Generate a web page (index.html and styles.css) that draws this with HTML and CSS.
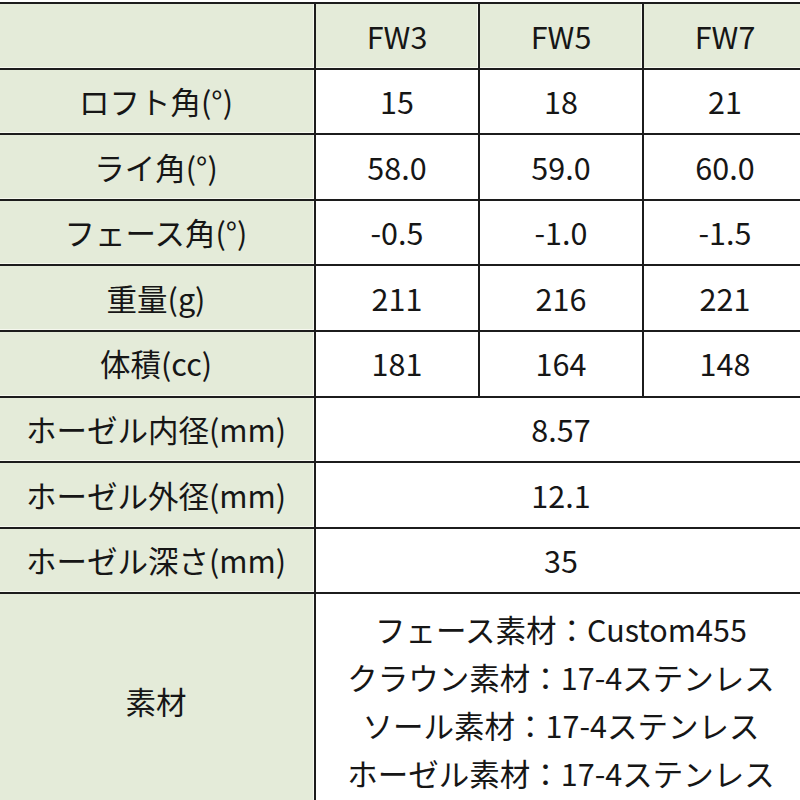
FILE: index.html
```html
<!DOCTYPE html>
<html lang="ja">
<head>
<meta charset="utf-8">
<title>FW スペック</title>
<link rel="stylesheet" href="styles.css">
</head>
<body>
<div class="frame">
<table class="spec">
  <colgroup>
    <col class="c-label"><col class="c-val"><col class="c-val"><col class="c-val">
  </colgroup>
  <tr class="head">
    <th></th><th>FW3</th><th>FW5</th><th>FW7</th>
  </tr>
  <tr><th>ロフト角(°)</th><td>15</td><td>18</td><td>21</td></tr>
  <tr><th>ライ角(°)</th><td>58.0</td><td>59.0</td><td>60.0</td></tr>
  <tr><th>フェース角(°)</th><td>-0.5</td><td>-1.0</td><td>-1.5</td></tr>
  <tr><th>重量(g)</th><td>211</td><td>216</td><td>221</td></tr>
  <tr><th>体積(cc)</th><td>181</td><td>164</td><td>148</td></tr>
  <tr><th>ホーゼル内径(mm)</th><td colspan="3">8.57</td></tr>
  <tr><th>ホーゼル外径(mm)</th><td colspan="3">12.1</td></tr>
  <tr><th>ホーゼル深さ(mm)</th><td colspan="3">35</td></tr>
  <tr class="material">
    <th>素材</th>
    <td colspan="3">
      <div class="lines">
        <span>フェース素材：Custom455</span>
        <span>クラウン素材：17-4ステンレス</span>
        <span>ソール素材：17-4ステンレス</span>
        <span>ホーゼル素材：17-4ステンレス</span>
      </div>
    </td>
  </tr>
</table>
</div>
</body>
</html>
```

FILE: styles.css
```css
html, body {
  margin: 0;
  padding: 0;
  background: #ffffff;
}

.frame {
  width: 800px;
  height: 800px;
  overflow: hidden;
  padding-top: 2px;
  box-sizing: border-box;
}

.spec {
  border-collapse: collapse;
  table-layout: fixed;
  width: 810px;
  margin-left: -4px;
  font-family: "Noto Sans CJK JP", "Noto Sans", sans-serif;
  font-size: 30.5px;
  color: #161616;
}

.c-label { width: 318px; }
.c-val { width: 164px; }

.spec th,
.spec td {
  border: 2px solid #1c1c1c;
  height: 63.6px;
  padding: 0;
  text-align: center;
  vertical-align: middle;
  font-weight: normal;
  line-height: 1.2;
}

.spec th {
  background: #e4ebd9;
  box-shadow: inset -1px -1px 0 #f6f8ef;
}

.spec td {
  background: #ffffff;
}

.material th,
.material td {
  height: 214px;
}

.lines {
  display: flex;
  flex-direction: column;
  align-items: center;
  line-height: 48px;
}
```
